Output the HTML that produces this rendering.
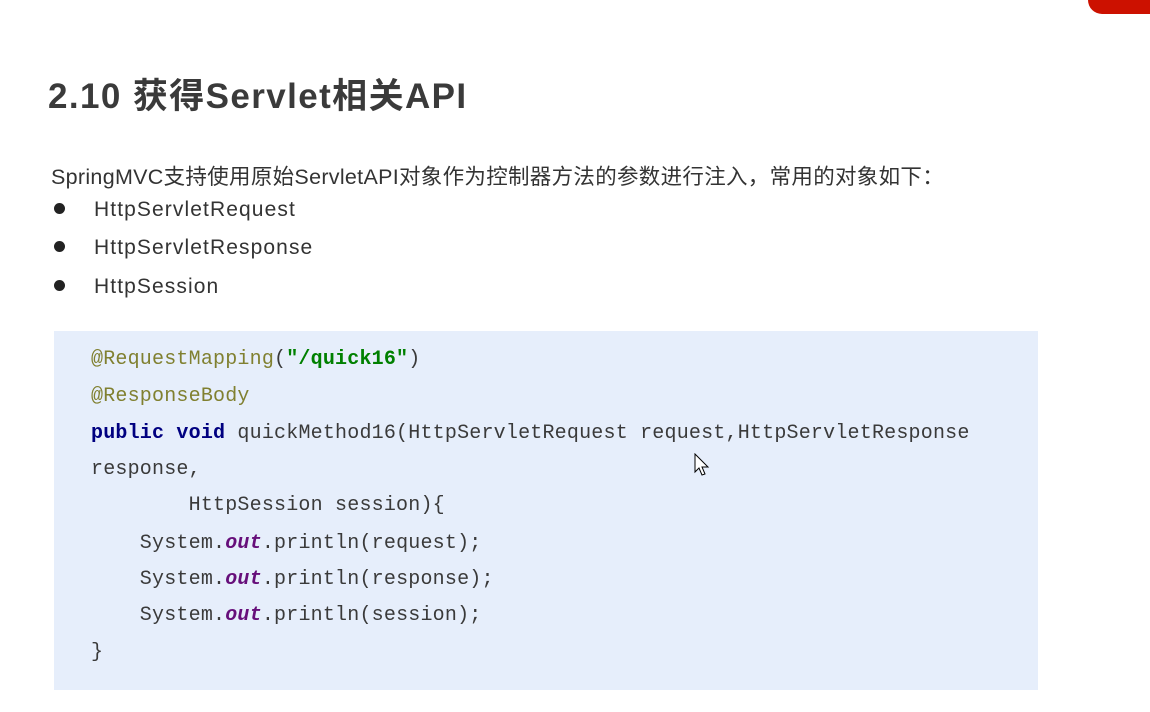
<!DOCTYPE html>
<html><head><meta charset="utf-8"><style>
body{margin:0;width:1150px;height:712px;background:#fff;position:relative;overflow:hidden;font-family:"Liberation Sans","Noto Sans CJK SC",sans-serif;color:#333}
.red{position:absolute;left:1088px;top:-20px;width:80px;height:34px;background:#cc1100;border-radius:14px}
h1{position:absolute;left:48px;top:68px;margin:0;font-size:35px;font-weight:bold;color:#3a3a3a;letter-spacing:1.4px}
.p{position:absolute;left:51px;top:160px;font-size:21.5px;letter-spacing:0.3px;color:#333;white-space:nowrap}
.b{position:absolute;left:54px;font-size:21px;letter-spacing:1.1px;color:#333}
.b i{display:inline-block;width:11px;height:11px;border-radius:50%;background:#222;margin-right:29px;vertical-align:2px}
.code{position:absolute;left:54px;top:331px;width:984px;height:359px;background:#e6eefb}
.l{position:absolute;left:91px;font-family:"Liberation Mono",monospace;font-size:20px;letter-spacing:0.2px;color:#3a3a3a;white-space:pre}
.an{color:#808030}.kw{color:#000080;font-weight:bold}.st{color:#008000;font-weight:bold}.f{color:#660e7a;font-weight:bold;font-style:italic}
</style></head><body>
<div class="red"></div>
<h1>2.10 获得Servlet相关API</h1>
<div class="p">SpringMVC支持使用原始ServletAPI对象作为控制器方法的参数进行注入，常用的对象如下：</div>
<div class="b" style="top:198px"><i></i>HttpServletRequest</div>
<div class="b" style="top:236px"><i></i>HttpServletResponse</div>
<div class="b" style="top:275px"><i></i>HttpSession</div>
<div class="code"></div>
<div class="l" style="top:348px"><span class="an">@RequestMapping</span>(<span class="st">"/quick16"</span>)</div>
<div class="l" style="top:385px"><span class="an">@ResponseBody</span></div>
<div class="l" style="top:422px"><span class="kw">public void</span> quickMethod16(HttpServletRequest request,HttpServletResponse</div>
<div class="l" style="top:458px">response,</div>
<div class="l" style="top:494px">        HttpSession session){</div>
<div class="l" style="top:532px">    System.<span class="f">out</span>.println(request);</div>
<div class="l" style="top:568px">    System.<span class="f">out</span>.println(response);</div>
<div class="l" style="top:604px">    System.<span class="f">out</span>.println(session);</div>
<div class="l" style="top:641px">}</div>
<svg style="position:absolute;left:694px;top:453px" width="16" height="24" viewBox="0 0 16 24"><path d="M1 1 L1 19 L5 15 L8 22 L11 21 L8 14 L14 14 Z" fill="#fff" stroke="#000" stroke-width="1"/></svg>
</body></html>
